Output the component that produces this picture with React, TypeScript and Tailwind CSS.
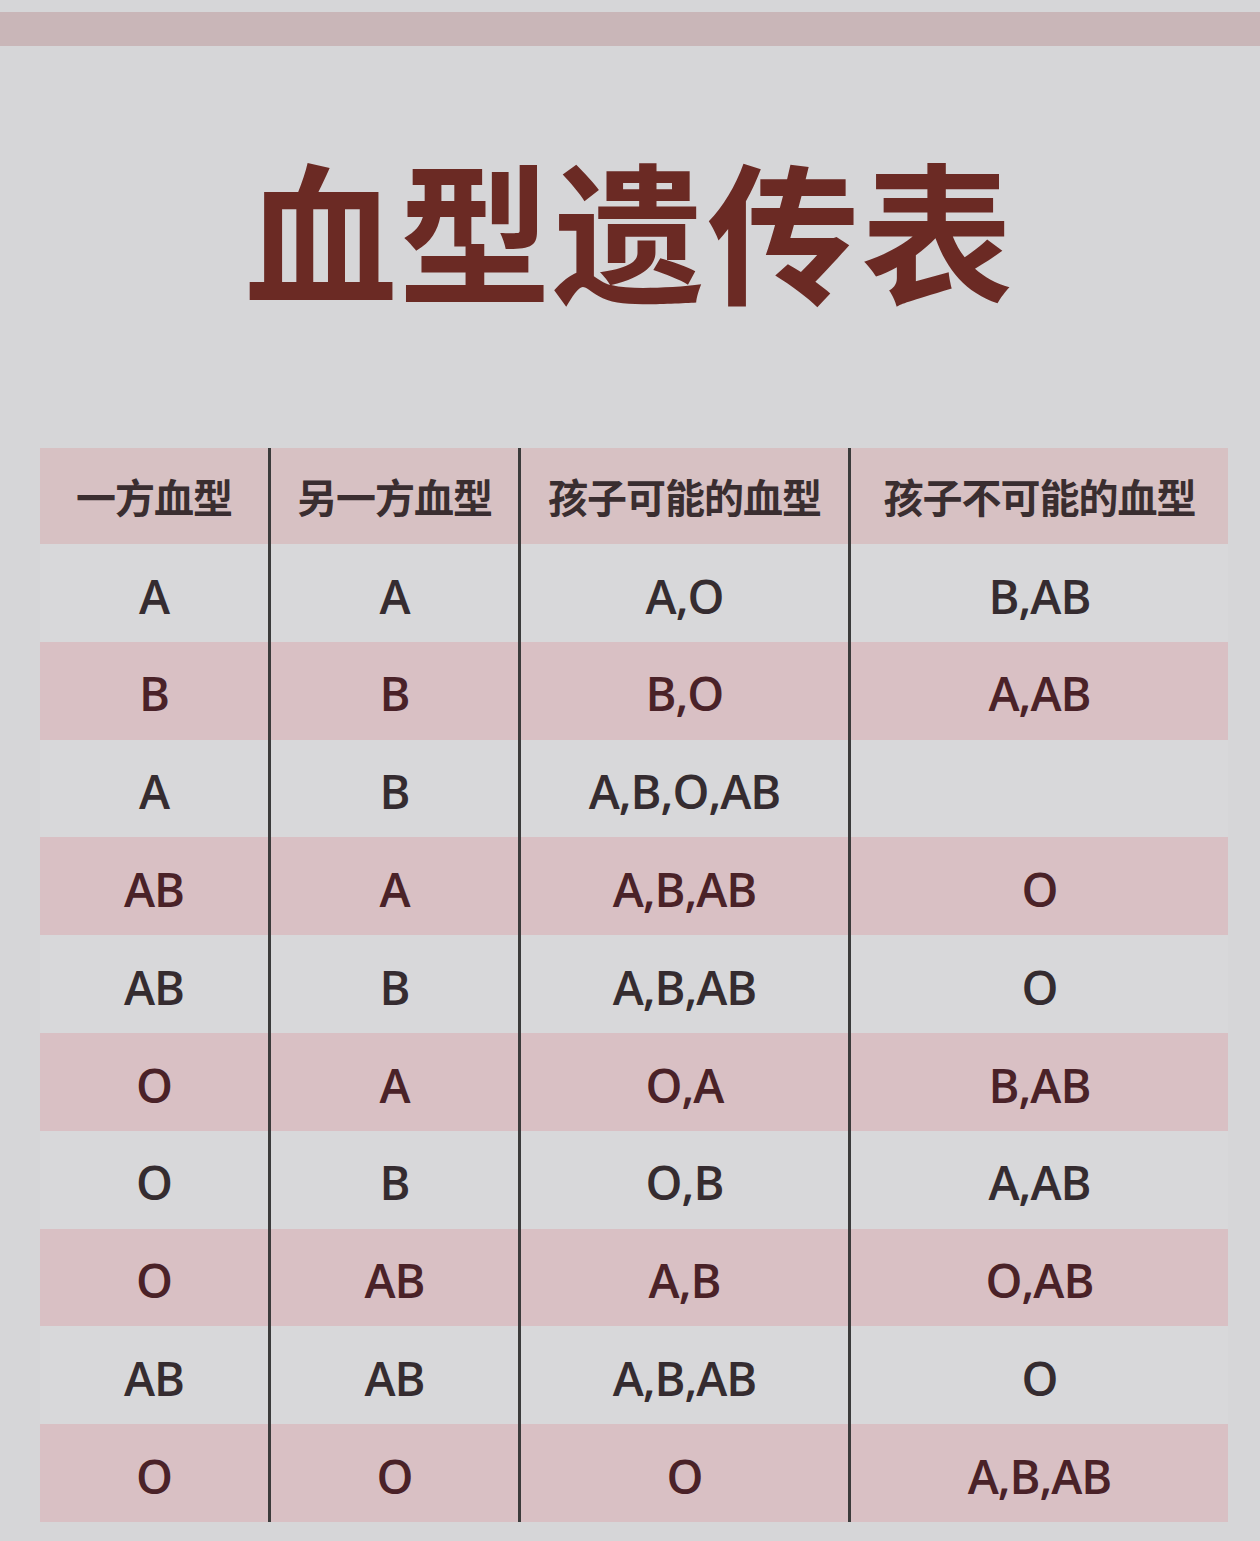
import React from "react";

const rows: string[][] = [
  ["A", "A", "A,O", "B,AB"],
  ["B", "B", "B,O", "A,AB"],
  ["A", "B", "A,B,O,AB", ""],
  ["AB", "A", "A,B,AB", "O"],
  ["AB", "B", "A,B,AB", "O"],
  ["O", "A", "O,A", "B,AB"],
  ["O", "B", "O,B", "A,AB"],
  ["O", "AB", "A,B", "O,AB"],
  ["AB", "AB", "A,B,AB", "O"],
  ["O", "O", "O", "A,B,AB"],
];

const headers = ["一方血型", "另一方血型", "孩子可能的血型", "孩子不可能的血型"];

export default function App() {
  return (
    <div className="w-[1260px] h-[1541px] bg-[#d6d6d8] overflow-hidden flex flex-col">
      <div className="mt-[12px] h-[34px] bg-[#c9b6b8]" />
      <h1
        className="mt-[106px] h-[150px] flex items-center justify-center text-[152px] leading-none font-bold text-[#6b2a24] tracking-[2px]"
        style={{ fontFamily: '"Noto Sans CJK SC", "Noto Sans", sans-serif' }}
      >
        血型遗传表
      </h1>
      <div
        className="mt-[146px] ml-[40px] w-[1188px] grid grid-cols-[228px_250px_330px_380px]"
        style={{ fontFamily: '"Open Sans", "Noto Sans CJK SC", sans-serif' }}
      >
        {headers.map((h, i) => (
          <div
            key={h}
            className={
              "h-[96px] flex items-center justify-center bg-[#d7c1c3] text-[40px] font-bold text-[#3a2e30] tracking-[-1px] " +
              (i > 0 ? "border-l-[3px] border-[#3b3b3b]" : "")
            }
            style={{ fontFamily: '"Noto Sans CJK SC", sans-serif' }}
          >
            {h}
          </div>
        ))}
        {rows.map((r, ri) =>
          r.map((c, ci) => (
            <div
              key={ri + "-" + ci}
              className={
                "h-[97.8px] pt-[6px] flex items-center justify-center text-[47px] font-semibold tracking-[-1px] " +
                (ri % 2 === 1 ? "bg-[#d9c0c4] text-[#4a2228] " : "bg-[#d8d8da] text-[#352c30] ") +
                (ci > 0 ? "border-l-[3px] border-[#3b3b3b]" : "")
              }
            >
              {c}
            </div>
          ))
        )}
      </div>
    </div>
  );
}
